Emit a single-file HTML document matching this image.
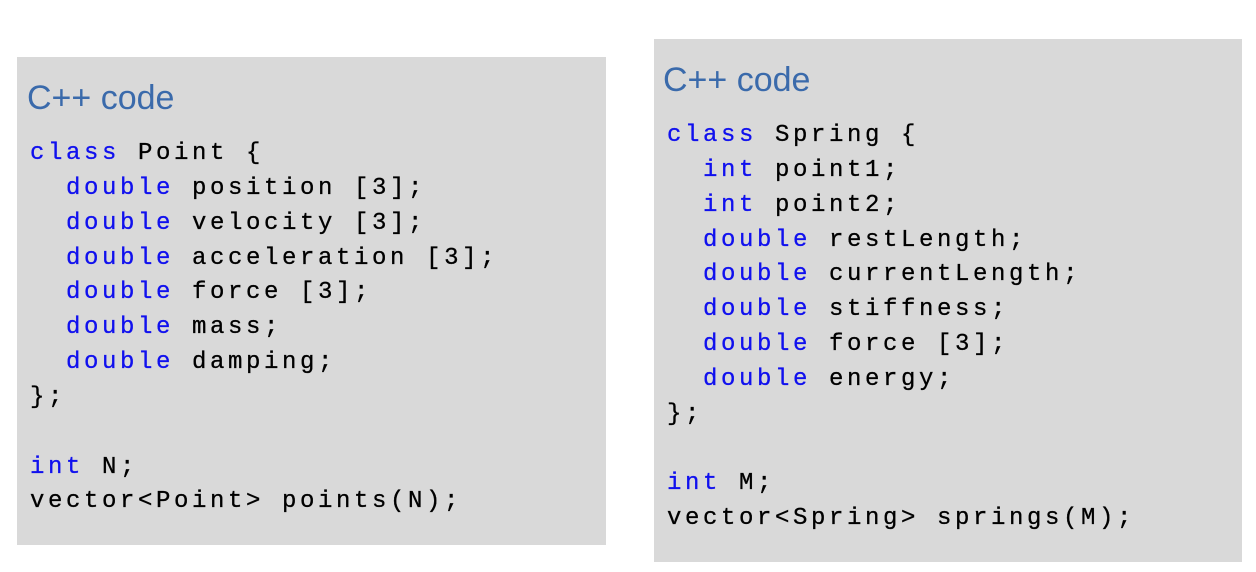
<!DOCTYPE html>
<html><head><meta charset="utf-8"><style>
html,body{margin:0;padding:0;background:#fff;width:1256px;height:572px;overflow:hidden;position:relative}
.box{position:absolute;background:#d9d9d9}
.t{position:absolute;font-family:"Liberation Sans",sans-serif;font-size:34px;color:#3a6aab;letter-spacing:0px;line-height:1}
pre{position:absolute;margin:0;font-family:"Liberation Mono",monospace;font-size:24px;letter-spacing:3.6px;line-height:34.85px;color:#000;-webkit-text-stroke:0.3px currentColor}
.k{color:#1010ee}
</style></head><body>
<div class="box" style="left:17px;top:57px;width:589px;height:488px"></div>
<div class="box" style="left:654px;top:39px;width:588px;height:523px"></div>
<div class="t" style="left:27px;top:81px">C++ code</div>
<div class="t" style="left:663px;top:63px">C++ code</div>
<pre style="left:30px;top:137px"><span class="k">class</span> Point {
  <span class="k">double</span> position [3];
  <span class="k">double</span> velocity [3];
  <span class="k">double</span> acceleration [3];
  <span class="k">double</span> force [3];
  <span class="k">double</span> mass;
  <span class="k">double</span> damping;
};

<span class="k">int</span> N;
vector&lt;Point&gt; points(N);</pre>
<pre style="left:667px;top:119px"><span class="k">class</span> Spring {
  <span class="k">int</span> point1;
  <span class="k">int</span> point2;
  <span class="k">double</span> restLength;
  <span class="k">double</span> currentLength;
  <span class="k">double</span> stiffness;
  <span class="k">double</span> force [3];
  <span class="k">double</span> energy;
};

<span class="k">int</span> M;
vector&lt;Spring&gt; springs(M);</pre>
</body></html>
